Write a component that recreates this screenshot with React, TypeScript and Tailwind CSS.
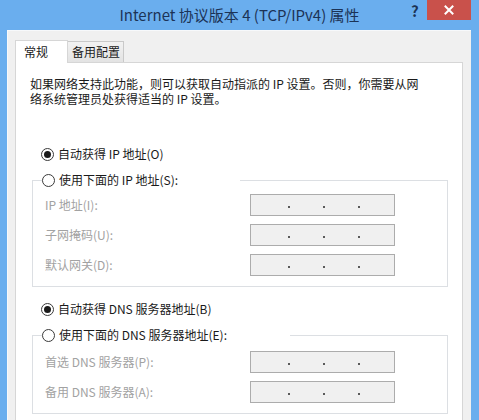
import React from "react";

const cjk = "font-['Noto_Sans_CJK_SC','Noto_Sans',sans-serif]";

function Radio({ checked }: { checked?: boolean }) {
    return (
        <span className="flex h-[13px] w-[13px] shrink-0 items-center justify-center rounded-full border border-[#3a3a3a] bg-white">
            {checked && <span className="h-[7px] w-[7px] rounded-full bg-[#1a1a1a]" />}
        </span>
    );
}

function RadioRow({ label, checked }: { label: string; checked?: boolean }) {
    return (
        <div className="flex h-[18px] items-center gap-[4px] text-[12px] leading-[18px] text-[#1a1a1a]">
            <Radio checked={checked} />
            <span>{label}</span>
        </div>
    );
}

function Dot() {
    return <span className="mt-[4px] h-[2px] w-[2px] bg-[#5a5a5a]" />;
}

// disabled ip address box with its three separators
function IpField() {
    return (
        <div className="flex h-[22px] w-[145px] items-center border border-[#acacac] bg-[#f0f0f0]">
            <span className="w-[37px]" />
            <Dot />
            <span className="w-[33px]" />
            <Dot />
            <span className="w-[33px]" />
            <Dot />
        </div>
    );
}

function FieldRow({ label }: { label: string }) {
    return (
        <div className="flex h-[22px] items-center">
            <span className="w-[208px] pl-[3px] text-[12px] text-[#a2a2a2]">{label}</span>
            <IpField />
        </div>
    );
}

function Group({
    legend,
    legendWidth,
    fields,
    top,
}: {
    legend: string;
    legendWidth: string;
    fields: string[];
    top: string;
}) {
    return (
        <fieldset className={`mt-[8px] ml-[16px] w-[416px] border border-[#dcdfe3] pl-[9px] pb-[10px] ${top}`}>
            <legend className={legendWidth}>
                <RadioRow label={legend} />
            </legend>
            <div className="flex flex-col gap-[8px]">
                {fields.map((f) => (
                    <FieldRow key={f} label={f} />
                ))}
            </div>
        </fieldset>
    );
}

export default function App() {
    return (
        <div className={`relative flex h-[420px] w-[479px] flex-col overflow-hidden bg-[#6aaeee] ${cjk}`}>
            {/* Title bar */}
            <div className="flex h-[30px] shrink-0 items-center justify-center">
                <span className="text-[15px] leading-[30px] text-[#1c3356]">
                    Internet 协议版本 4 (TCP/IPv4) 属性
                </span>
            </div>
            <span className="absolute left-[411px] top-[1px] text-[15px] font-bold leading-[20px] text-[#1c3356]">?</span>
            <button className="absolute right-[8px] top-0 flex h-[20px] w-[44px] items-center justify-center bg-[#c9514b]">
                <svg width="10" height="10" viewBox="0 0 10 10">
                    <path d="M1.5 1.5l7 7M8.5 1.5l-7 7" stroke="#fff" strokeWidth="2" strokeLinecap="square" />
                </svg>
            </button>

            {/* Dialog body */}
            <div className="ml-[7px] mr-[8px] flex-1 border-l border-t border-[#f7f9fb] bg-[#f0f0f0] pl-[7px] pr-[8px] pt-[9px]">
                {/* Tabs */}
                <div className="flex h-[22px] items-end">
                    <div className="relative z-10 -mb-px h-[23px] w-[53px] border border-b-0 border-[#d6d6d6] bg-white pl-[8px] pt-[2px] text-[12px] leading-[18px] text-[#1a1a1a]">
                        常规
                    </div>
                    <div className="h-[21px] w-[56px] border border-b-0 border-l-0 border-[#c9c9c9] bg-gradient-to-b from-[#f2f2f2] to-[#e3e3e3] pl-[4px] pt-[1px] text-[12px] leading-[18px] text-[#1a1a1a]">
                        备用配置
                    </div>
                </div>

                {/* Tab panel */}
                <div className="w-[448px] border border-[#d6d6d6] bg-white pb-[20px]">
                    <p className="pl-[14px] pt-[13px] text-[12px] leading-[15px] text-[#1a1a1a]">
                        如果网络支持此功能，则可以获取自动指派的 IP 设置。否则，你需要从网
                        <br />
                        络系统管理员处获得适当的 IP 设置。
                    </p>

                    <div className="ml-[25px] mt-[39px]">
                        <RadioRow label="自动获得 IP 地址(O)" checked />
                    </div>
                    <Group
                        legend="使用下面的 IP 地址(S):"
                        legendWidth="w-[198px]"
                        top="pt-[5px]"
                        fields={["IP 地址(I):", "子网掩码(U):", "默认网关(D):"]}
                    />

                    <div className="ml-[25px] mt-[13px]">
                        <RadioRow label="自动获得 DNS 服务器地址(B)" checked />
                    </div>
                    <Group
                        legend="使用下面的 DNS 服务器地址(E):"
                        legendWidth="w-[248px]"
                        top="pt-[7px]"
                        fields={["首选 DNS 服务器(P):", "备用 DNS 服务器(A):"]}
                    />
                </div>
            </div>
        </div>
    );
}
